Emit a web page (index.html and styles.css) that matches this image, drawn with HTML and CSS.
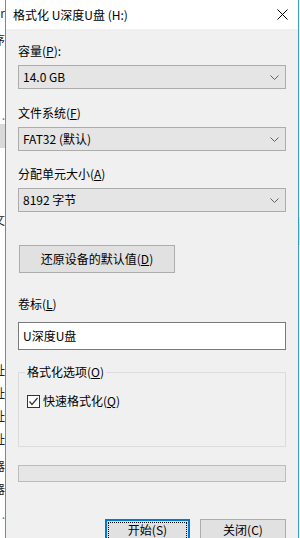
FILE: index.html
```html
<!DOCTYPE html>
<html lang="zh-CN">
<head>
    <meta charset="UTF-8">
    <meta name="viewport" content="width=device-width, initial-scale=1.0">
    <title>格式化 U深度U盘 (H:)</title>
    <link rel="stylesheet" href="styles.css">
</head>
<body>
    <div class="screen">
        <!-- window behind the dialog, only a sliver shows -->
        <div class="behind behind-left">
            <div class="frag frag-1">Pur</div>
            <div class="frag frag-2">序</div>
            <div class="frag frag-dot">.</div>
            <div class="frag-bar"></div>
            <div class="frag frag-3">文</div>
            <div class="frag frag-4">址</div>
            <div class="frag frag-5">址</div>
            <div class="frag frag-5">址</div>
            <div class="frag frag-5">址</div>
            <div class="frag frag-6">器</div>
            <div class="frag frag-5">器</div>
            <div class="frag frag-dot2">.</div>
        </div>

        <div class="dialog">
            <div class="titlebar">
                <span class="title">格式化 U深度U盘 (H:)</span>
                <svg class="close" width="11" height="11" viewBox="0 0 11 11">
                    <path d="M0.5 0.5 L10.5 10.5 M10.5 0.5 L0.5 10.5" stroke="#000" stroke-width="1" fill="none"/>
                </svg>
            </div>

            <div class="content">
                <div class="label label-first">容量(<u>P</u>):</div>
                <div class="combo">
                    <span>14.0 GB</span>
                    <svg class="chevron" width="9" height="5" viewBox="0 0 9 5"><path d="M0.5 0.5 L4.5 4.5 L8.5 0.5" stroke="#606060" fill="none"/></svg>
                </div>

                <div class="label">文件系统(<u>F</u>)</div>
                <div class="combo">
                    <span>FAT32 (默认)</span>
                    <svg class="chevron" width="9" height="5" viewBox="0 0 9 5"><path d="M0.5 0.5 L4.5 4.5 L8.5 0.5" stroke="#606060" fill="none"/></svg>
                </div>

                <div class="label label-third">分配单元大小(<u>A</u>)</div>
                <div class="combo">
                    <span>8192 字节</span>
                    <svg class="chevron" width="9" height="5" viewBox="0 0 9 5"><path d="M0.5 0.5 L4.5 4.5 L8.5 0.5" stroke="#606060" fill="none"/></svg>
                </div>

                <button class="btn btn-restore">还原设备的默认值(<u>D</u>)</button>

                <div class="label label-volume">卷标(<u>L</u>)</div>
                <div class="textbox">U深度U盘</div>

                <fieldset class="group">
                    <legend>格式化选项(<u>O</u>)</legend>
                    <div class="check">
                        <span class="box">
                            <svg width="11" height="11" viewBox="0 0 11 11"><path d="M1.5 5.5 L4 8.5 L9.5 2" stroke="#333" stroke-width="1.2" fill="none"/></svg>
                        </span>
                        <span>快速格式化(<u>Q</u>)</span>
                    </div>
                </fieldset>

                <div class="progress"></div>

                <div class="actions">
                    <button class="btn btn-primary"><span class="focus"></span>开始(S)</button>
                    <button class="btn btn-close">关闭(C)</button>
                </div>
            </div>
        </div>

        <div class="behind behind-right">
            <div class="frag-blue"></div>
        </div>
    </div>
</body>
</html>
```

FILE: styles.css
```css
body {
    margin: 0;
    font-family: "Noto Sans CJK SC", "Noto Sans", sans-serif;
    font-size: 12px;
    color: #000;
    background: #fff;
}

.screen {
    display: flex;
    width: 300px;
    height: 538px;
    overflow: hidden;
}

/* slivers of the window behind */
.behind {
    background: #fff;
    flex: none;
}

.behind-left {
    width: 5px;
    overflow: hidden;
}

.behind-right {
    width: 1px;
}

.frag {
    display: flex;
    justify-content: flex-end;
    white-space: nowrap;
    line-height: 12px;
    height: 12px;
    font-size: 12px;
    color: #222;
}

.frag-1 { margin-top: 7px; }
.frag-2 { margin-top: 15px; }
.frag-dot { margin-top: 63px; color: #2a7fd0; }
.frag-3 { margin-top: 66px; }
.frag-4 { margin-top: 138px; }
.frag-5 { margin-top: 11px; }
.frag-6 { margin-top: 15px; }
.frag-dot2 { margin-top: 13px; color: #2a7fd0; }

.frag-bar {
    margin-top: 3px;
    height: 24px;
    background: #d9d9d9;
}

.frag-blue {
    margin-top: 217px;
    height: 28px;
    background: #c9e3f1;
}

/* dialog */
.dialog {
    flex: none;
    width: 294px;
    box-sizing: border-box;
    border-left: 1px solid #3a9dcb;
    border-right: 1px solid #3a9dcb;
    background: #f0f0f0;
}

.titlebar {
    height: 29px;
    background: #fff;
    display: flex;
    align-items: center;
    justify-content: space-between;
    padding: 0 10px 0 7px;
}

.title {
    line-height: 16px;
}

.content {
    padding: 0 12px;
}

.label {
    margin-top: 16px;
    line-height: 16px;
    height: 16px;
}

.label-first { margin-top: 14px; }
.label-third { margin-top: 15px; }
.label-volume { margin-top: 23px; }

.combo {
    margin-top: 6px;
    height: 24px;
    box-sizing: border-box;
    border: 1px solid #acacac;
    background: #e5e5e5;
    display: flex;
    align-items: center;
    justify-content: space-between;
    padding: 0 6px 0 4px;
    line-height: 16px;
}

.chevron {
    margin-top: 1px;
}

.btn {
    font-family: inherit;
    font-size: 12px;
    color: #000;
    background: #e1e1e1;
    border: 1px solid #adadad;
    padding: 0;
    line-height: 16px;
    box-sizing: border-box;
}

.btn-restore {
    display: block;
    margin: 33px 0 0 1px;
    width: 156px;
    height: 28px;
}

.textbox {
    margin-top: 10px;
    height: 28px;
    box-sizing: border-box;
    border: 1px solid #7a7a7a;
    background: #fff;
    padding: 0 4px;
    line-height: 26px;
}

.group {
    margin: 14px 0 0;
    padding: 0 8px 37px;
    border: 1px solid #dcdcdc;
    min-width: 0;
}

.group legend {
    margin-left: -2px;
    padding: 0 2px;
    line-height: 16px;
}

.check {
    margin-top: 13px;
    height: 16px;
    display: flex;
    align-items: center;
    gap: 3px;
    line-height: 16px;
}

.box {
    width: 13px;
    height: 13px;
    box-sizing: border-box;
    border: 1px solid #333;
    background: #fff;
    display: flex;
    align-items: center;
    justify-content: center;
}

.progress {
    margin-top: 18px;
    height: 17px;
    box-sizing: border-box;
    border: 1px solid #bcbcbc;
    background: #e6e6e6;
}

.actions {
    margin-top: 37px;
    display: flex;
    justify-content: flex-end;
    gap: 10px;
}

.btn-primary,
.btn-close {
    height: 26px;
    padding-bottom: 4px;
}

.btn-primary {
    width: 85px;
    position: relative;
    border: 2px solid #0078d7;
}

.btn-primary .focus {
    position: absolute;
    inset: 1px;
    border: 1px dotted #000;
}

.btn-close {
    width: 86px;
}
```
